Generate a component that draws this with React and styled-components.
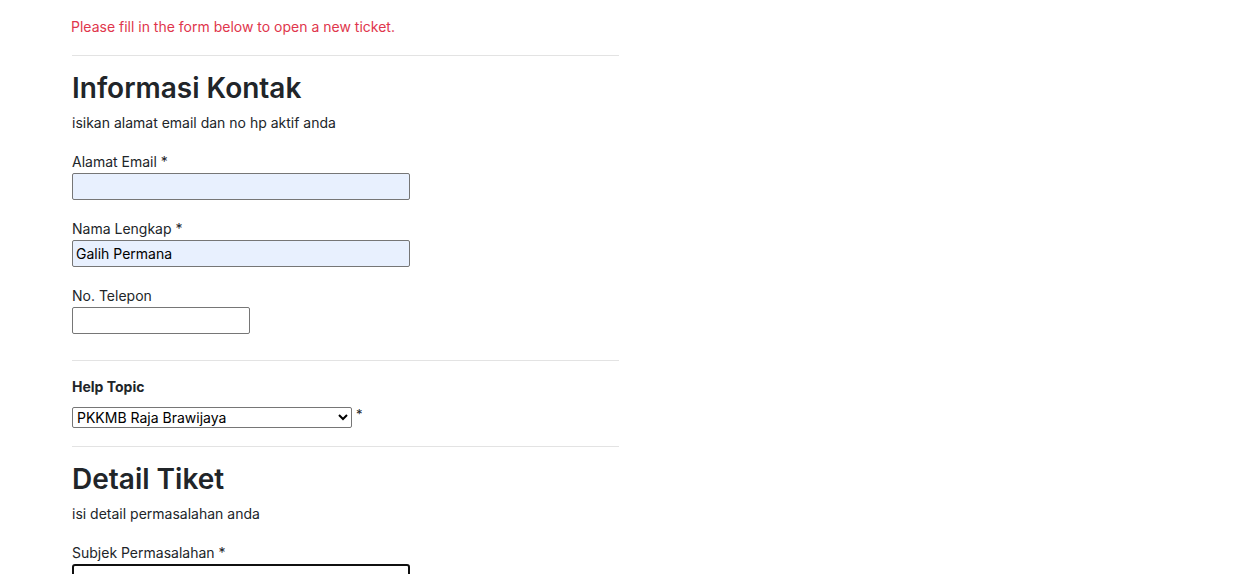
import React from "react";
import styled, { createGlobalStyle } from "styled-components";

const Global = createGlobalStyle`
  html, body { margin: 0; padding: 0; background: #fff; }
  body {
    font-family: "Inter", "Noto Sans", sans-serif;
    color: #212529;
    overflow: hidden;
  }
`;

const Page = styled.div`
  width: 547px;
  margin: -33px 0 0 72px;
`;

const Title = styled.h1`
  margin: 0;
  font-size: 28px;
  line-height: 34px;
  font-weight: 600;
`;

const Notice = styled.p`
  margin: 16px 0 0 -1px;
  font-size: 14px;
  line-height: 20px;
  color: #e0364c;
`;

const Rule = styled.hr`
  margin: ${(p) => p.$top || 18}px 0 0;
  border: 0;
  border-top: 1px solid #e3e3e3;
  height: 0;
`;

const SectionTitle = styled.h2`
  margin: 15px 0 0;
  font-size: 28px;
  line-height: 34px;
  font-weight: 600;
`;

const SectionNote = styled.p`
  margin: 8px 0 0;
  font-size: 14px;
  line-height: 20px;
`;

const Field = styled.div`
  margin-top: ${(p) => p.$top ?? 19}px;
  display: flex;
  flex-direction: column;
  align-items: flex-start;
`;

const Label = styled.label`
  font-size: 14px;
  line-height: 20px;
  font-weight: ${(p) => (p.$bold ? 700 : 400)};
`;

const TextInput = styled.input`
  box-sizing: border-box;
  margin-top: 1px;
  width: ${(p) => p.$w || 338}px;
  height: 27px;
  padding: 0 3px;
  font-family: inherit;
  font-size: 14px;
  color: #000;
  background: ${(p) => (p.$filled ? "#e8f0fe" : "#fff")};
  border: 1px solid #767676;
  border-radius: 2px;
  outline: none;
  ${(p) =>
    p.$focused &&
    `
    border: 2px solid #101010;
    border-radius: 3px;
  `}
`;

const SelectRow = styled.div`
  margin-top: 10px;
  display: flex;
  align-items: flex-start;
  gap: 4px;
  font-size: 14px;
`;

const Select = styled.select`
  box-sizing: border-box;
  width: 280px;
  height: 21px;
  font-family: inherit;
  font-size: 14px;
  color: #000;
  background: #fff;
  border: 1px solid #767676;
  border-radius: 2px;
  padding: 0;
`;

const Star = styled.span`
  line-height: 14px;
  font-size: 13px;
`;

export default function App() {
  return (
    <>
      <Global />
      <Page>
        <Title>Open a New Ticket</Title>
        <Notice>Please fill in the form below to open a new ticket.</Notice>
        <Rule $top={18} />

        <SectionTitle>Informasi Kontak</SectionTitle>
        <SectionNote>isikan alamat email dan no hp aktif anda</SectionNote>

        <Field>
          <Label>Alamat Email *</Label>
          <TextInput type="text" $filled defaultValue="" />
        </Field>
        <Field>
          <Label>Nama Lengkap *</Label>
          <TextInput type="text" $filled defaultValue="Galih Permana" />
        </Field>
        <Field>
          <Label>No. Telepon</Label>
          <TextInput type="text" $w={178} defaultValue="" />
        </Field>

        <Rule $top={26} />

        <Field $top={16}>
          <Label $bold>Help Topic</Label>
        </Field>
        <SelectRow>
          <Select defaultValue="pkkmb">
            <option value="pkkmb">PKKMB Raja Brawijaya</option>
          </Select>
          <Star>*</Star>
        </SelectRow>

        <Rule $top={18} />

        <SectionTitle>Detail Tiket</SectionTitle>
        <SectionNote>isi detail permasalahan anda</SectionNote>

        <Field>
          <Label>Subjek Permasalahan *</Label>
          <TextInput type="text" $focused defaultValue="" />
        </Field>
      </Page>
    </>
  );
}
